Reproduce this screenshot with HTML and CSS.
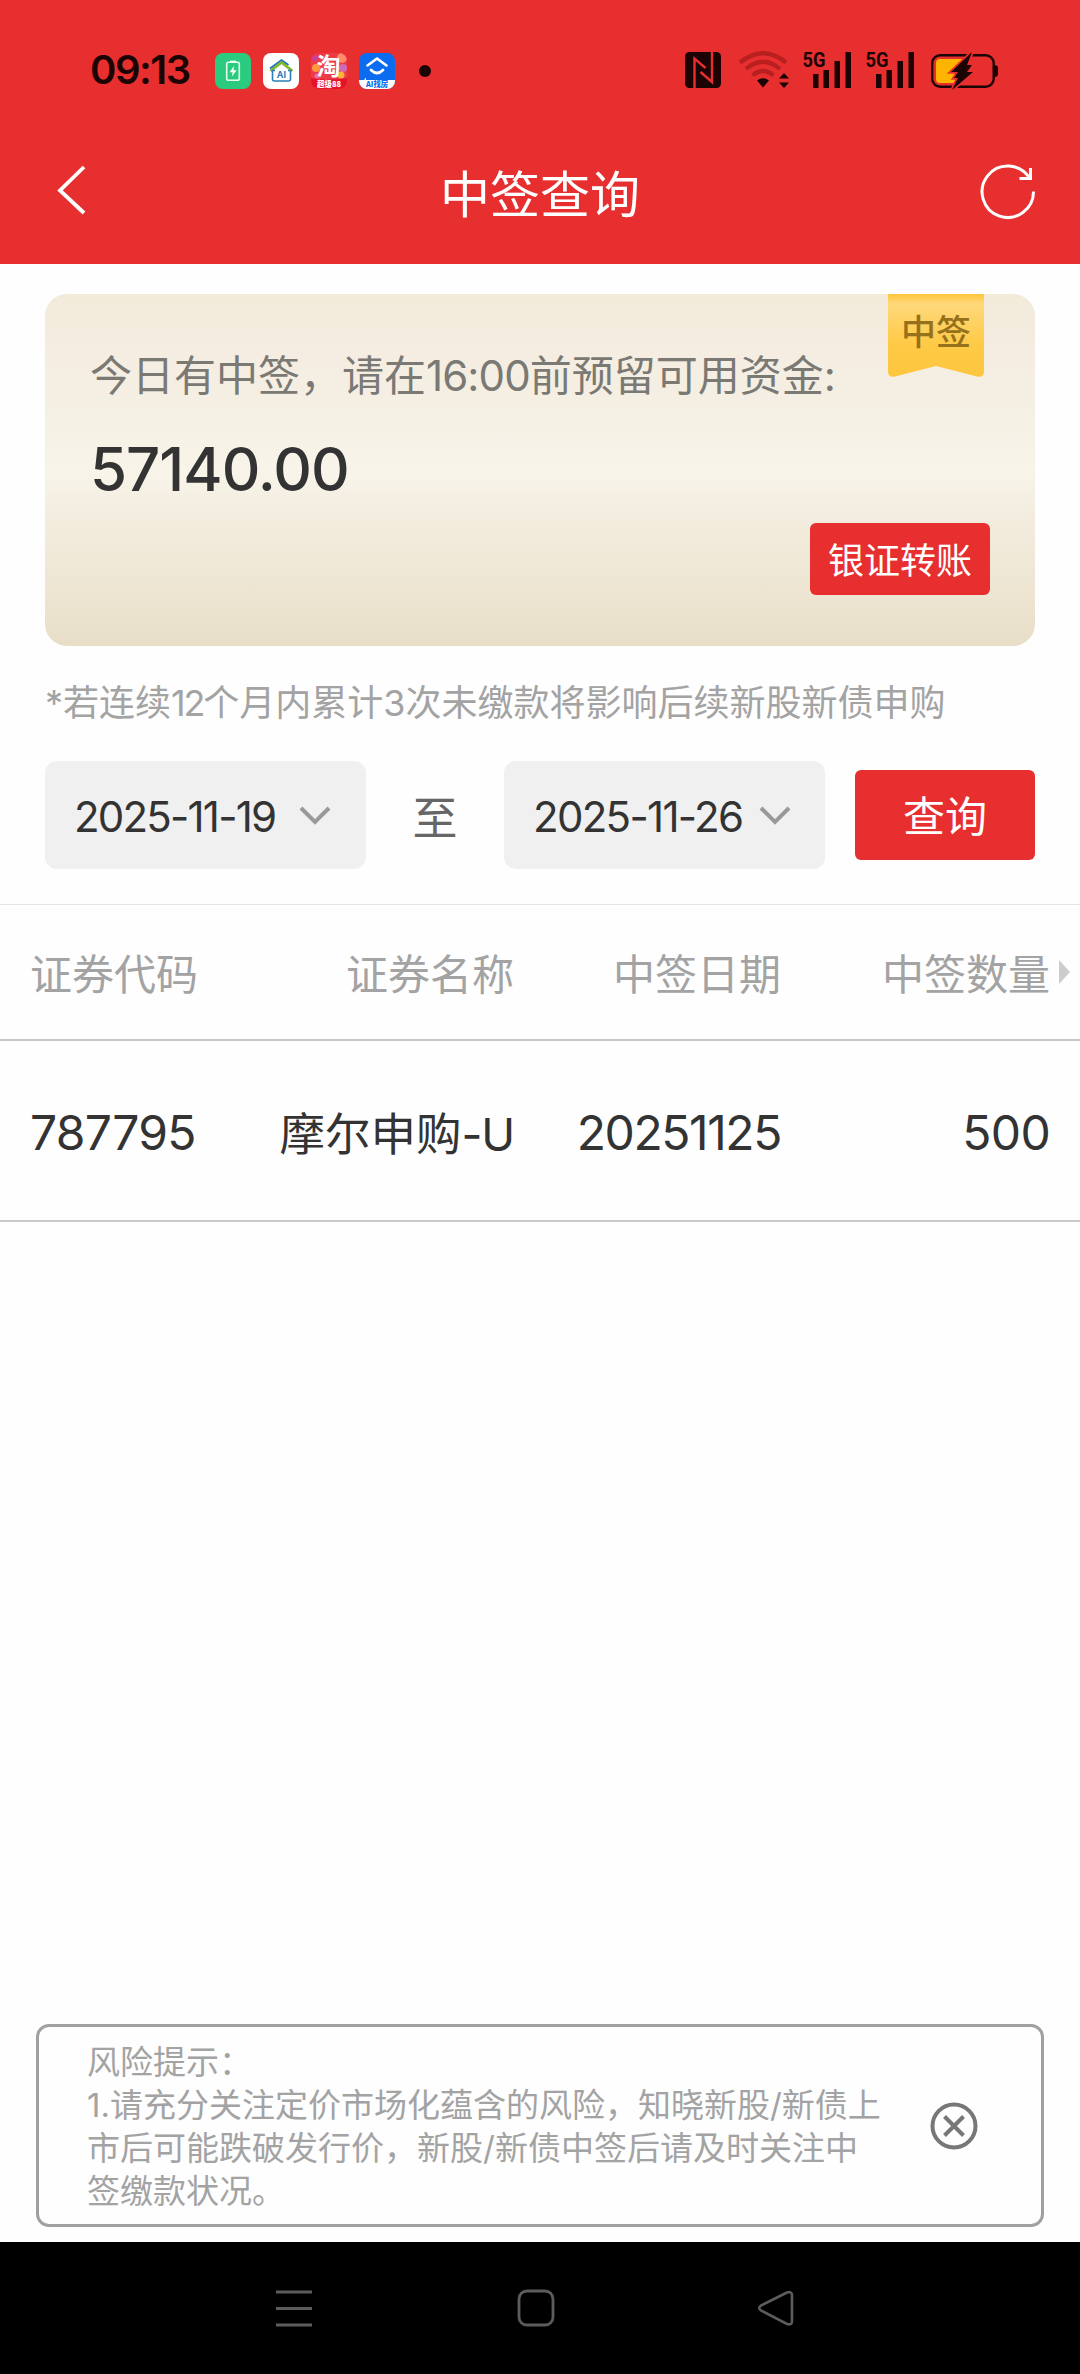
FILE: index.html
```html
<!DOCTYPE html>
<html lang="zh-CN">
<head>
<meta charset="utf-8">
<title>中签查询</title>
<link rel="stylesheet" href="styles.css">
</head>
<body>
<div class="screen">
  <div class="status">
    <span class="time">09:13</span>
    <div class="apps">
      <svg width="36" height="36" viewBox="0 0 36 36"><rect width="36" height="36" rx="8" fill="#2acb7e"/><rect x="11.7" y="9.2" width="12.6" height="18" rx="1.8" fill="none" stroke="#e9fff3" stroke-width="1.6"/><path d="M15 7.6h6v2h-6z" fill="#e9fff3"/><path d="M19 13l-4.400 6.200h3L17 23.600l4.600-6.400h-3z" fill="#fff"/></svg>
      <svg width="36" height="36" viewBox="0 0 36 36"><rect width="36" height="36" rx="8" fill="#fff"/><path d="M7 15.500L18.500 7l7 5" fill="none" stroke="#1d70b8" stroke-width="1.800"/><path d="M7.500 18L18.500 9.500 29.500 18" fill="none" stroke="#7db928" stroke-width="2.600"/><path d="M12 17.500H9.500V26q0 2 2 2h14q2 0 2-2v-8.500H25" fill="none" stroke="#2a80b8" stroke-width="1.600"/><text x="18.300" y="25" text-anchor="middle" class="tiny-ai">AI</text></svg>
      <svg width="36" height="36" viewBox="0 0 36 36"><defs><clipPath id="tb"><rect width="36" height="36" rx="8"/></clipPath></defs><g clip-path="url(#tb)"><rect width="36" height="36" fill="#ee3b48"/><circle cx="5" cy="15" r="4" fill="#ff9a3c"/><circle cx="31" cy="5" r="5" fill="#ff8a6c"/><circle cx="32" cy="15" r="4" fill="#d06ab8"/><circle cx="4" cy="5" r="3" fill="#c93fa0"/><circle cx="30" cy="22" r="3.500" fill="#ffb03c"/><circle cx="6" cy="23" r="2.500" fill="#e86ab0"/><path d="M0 25q18 3 36 0v11H0z" fill="#e6122c"/></g><text x="17.500" y="21.500" text-anchor="middle" class="tiny-tao">淘</text><text x="18" y="34" text-anchor="middle" class="tiny-sale" textLength="24" lengthAdjust="spacingAndGlyphs">超级88</text></svg>
      <svg width="36" height="36" viewBox="0 0 36 36"><defs><clipPath id="bk"><rect width="36" height="36" rx="8"/></clipPath></defs><g clip-path="url(#bk)"><rect width="36" height="36" fill="#0b6cf0"/><path d="M0 27h5l2-2.500V27h29v9H0z" fill="#fff"/><path d="M8.500 12.500L18 5.500l9.500 7" fill="none" stroke="#fff" stroke-width="2.600" stroke-linecap="round" stroke-linejoin="round"/><path d="M12 17q6 6 12 0" fill="none" stroke="#fff" stroke-width="2.800" stroke-linecap="round"/></g><text x="18" y="34" text-anchor="middle" class="tiny-find" textLength="22" lengthAdjust="spacingAndGlyphs">AI找房</text></svg>
    </div>
    <span class="dot"></span>
    <svg class="sys" width="320" height="40" viewBox="0 0 320 40">
      <rect x="0" y="1" width="36" height="36" rx="4.500" fill="#1c0404"/>
      <path d="M9.500 37V7.500L20.500 17M27 1V31L15.500 21" fill="none" stroke="#e72f2f" stroke-width="2.400"/>
      <g fill="none" stroke="#b91f1f" stroke-width="4.200"><path d="M55 11.500Q78-7 101 11.500"/><path d="M61 18Q78 3.500 95 18"/><path d="M67.500 24.500Q78 15.500 88.500 24.500"/></g>
      <path d="M72 29.500Q78 25 84 29.500L78 36.500z" fill="#1c0404"/>
      <path d="M94 27.500L99 22l5 5.500zM94 31.500h10L99 37z" fill="#1c0404"/>
      <g fill="#1c0404"><text x="117.500" y="15.800" class="net" textLength="23" lengthAdjust="spacingAndGlyphs">5G</text><rect x="128" y="23" width="5.500" height="14"/><rect x="138.500" y="19" width="5.500" height="18"/><rect x="149.500" y="10" width="5.500" height="27"/><rect x="160.500" y="1" width="5.500" height="36"/>
      <text x="180.500" y="15.800" class="net" textLength="23" lengthAdjust="spacingAndGlyphs">5G</text><rect x="191" y="23" width="5.500" height="14"/><rect x="201.500" y="19" width="5.500" height="18"/><rect x="212.500" y="10" width="5.500" height="27"/><rect x="223.500" y="1" width="5.500" height="36"/></g>
      <rect x="247.200" y="4.200" width="61.500" height="31.600" rx="8" fill="none" stroke="#1c0404" stroke-width="2.400"/>
      <path d="M309 14q4 0 4 3v6q0 3-4 3z" fill="#1c0404"/>
      <path d="M255 8h24L270 32h-15q-4 0-4-4V12q0-4 4-4z" fill="#ffb400"/>
      <path d="M287 1L266 21h7l-4 6h4l-6 12 21-18h-6l5-7h-5z" fill="#1c0404" stroke="#e72f2f" stroke-width="3.500" paint-order="stroke"/>
    </svg>
  </div>
  <header class="bar">
    <svg class="back" width="32" height="54" viewBox="0 0 32 54"><path d="M28 4L4 27.500 28 50" fill="none" stroke="#fff" stroke-width="3.800"/></svg>
    <h1>中签查询</h1>
    <svg class="refresh" width="58" height="58" viewBox="0 0 58 58"><path d="M53.500 28.500A25.700 25.700 0 1 1 49.500 15" fill="none" stroke="#fff" stroke-width="3"/><path d="M39.500 15.600H50.500V5" fill="none" stroke="#fff" stroke-width="3"/></svg>
  </header>
  <main>
    <section class="card">
      <p class="hint">今日有中签，请在<span class="n16">16:00</span>前预留可用资金:</p>
      <div class="amount">57140.00</div>
      <button class="transfer">银证转账</button>
      <div class="ribbon">
        <svg width="96" height="83" viewBox="0 0 96 83"><defs><linearGradient id="rg" x1="0" y1="0" x2="0" y2="1"><stop offset="0" stop-color="#fec63a"/><stop offset=".12" stop-color="#ffd87c"/><stop offset=".6" stop-color="#ffca46"/><stop offset="1" stop-color="#fec63e"/></linearGradient></defs><path d="M0 0h96v77q0 7-7 5.500L48 72 7 82.500Q0 84 0 77z" fill="url(#rg)"/></svg>
        <span>中签</span>
      </div>
    </section>
    <p class="note">*若连续<span class="n12">12</span>个月内累计3次未缴款将影响后续新股新债申购</p>
    <div class="filter">
      <div class="date"><span>2025-11-19</span><svg width="32" height="22" viewBox="0 0 32 22"><path d="M2 3l14 14L30 3" fill="none" stroke="#999" stroke-width="4"/></svg></div>
      <span class="to">至</span>
      <div class="date late"><span>2025-11-26</span><svg width="32" height="22" viewBox="0 0 32 22"><path d="M2 3l14 14L30 3" fill="none" stroke="#999" stroke-width="4"/></svg></div>
      <button class="query">查询</button>
    </div>
    <div class="thead row"><span>证券代码</span><span>证券名称</span><span>中签日期</span><span>中签数量</span><i class="more"></i></div>
    <div class="tbody row"><span class="code">787795</span><span class="name">摩尔申购<span class="suffix">-U</span></span><span class="day">20251125</span><span class="qty">500</span></div>
  </main>
  <aside class="risk">
    <p>风险提示：<br>1.请充分关注定价市场化蕴含的风险，知晓新股/新债上<br>市后可能跌破发行价，新股/新债中签后请及时关注中<br>签缴款状况。</p>
    <svg width="48" height="48" viewBox="0 0 48 48"><circle cx="24" cy="24" r="21.500" fill="none" stroke="#777" stroke-width="4"/><path d="M14.500 14.500l19 19M33.500 14.500l-19 19" stroke="#777" stroke-width="4"/></svg>
  </aside>
  <nav class="nav">
    <svg width="36" height="38" viewBox="0 0 36 38"><path d="M0 3h36M0 19.500h36M0 36h36" stroke="#5c5c5c" stroke-width="3"/></svg>
    <svg class="home" width="38" height="38" viewBox="0 0 38 38"><rect x="2" y="2" width="34" height="34" rx="8" fill="none" stroke="#5c5c5c" stroke-width="2.800"/></svg>
    <svg width="38" height="38" viewBox="0 0 38 38"><path d="M30 3.500L4 16.500q-3.500 2.500 0 5L30 35q5 1.500 5-3V6.500q0-4.500-5-3z" fill="none" stroke="#5c5c5c" stroke-width="2.600"/></svg>
  </nav>
</div>
</body>
</html>
```
FILE: styles.css
```css
* { box-sizing: border-box; margin: 0; padding: 0; }
body { background: #fff; }
.screen {
  width: 1080px; height: 2374px;
  display: flex; flex-direction: column;
  background: #fefefe; color: #333;
  font-family: Inter, "Noto Sans CJK SC", sans-serif;
  font-weight: 400; white-space: nowrap;
}
svg { display: block; flex: none; overflow: visible; }
button { border: 0; background: #e72f2f; color: #fff; font: inherit; border-radius: 6px; }

.status { height: 132px; padding: 10px 0 0 90px; background: #e72f2f; display: flex; align-items: center; }
.time { width: 125px; font-size: 40px; font-weight: 600; line-height: 48px; margin-bottom: 2px; color: #1c0404; letter-spacing: -1.500px; }
.apps { display: flex; gap: 12px; }
.dot { width: 12px; height: 12px; border-radius: 50%; background: #1c0404; margin-left: 24px; }
.sys { margin-left: 254px; }
.net { font: 700 21px Roboto, sans-serif; }
.tiny-ai { font: 700 9px Inter, sans-serif; fill: #2a80b8; }
.tiny-tao { font: 700 24px "Noto Sans CJK SC", sans-serif; fill: #fff; }
.tiny-sale { font: 900 8px "Noto Sans CJK SC", sans-serif; fill: #fff; }
.tiny-find { font: 900 7.500px "Noto Sans CJK SC", sans-serif; fill: #0b6cf0; }

.bar { height: 132px; padding: 0 42px 0 56px; background: #e72f2f; color: #fff; display: flex; align-items: center; justify-content: space-between; }
.bar h1 { font-size: 50px; font-weight: 400; line-height: 60px; margin: 0 0 6px 12px; }
.back { margin-bottom: 16px; }
.refresh { margin-bottom: 12px; }

main { flex: 1; }
.card {
  position: relative; margin: 30px 45px 0; height: 352px; padding: 52px 45px 51px;
  border-radius: 22px; display: flex; flex-direction: column;
  background: linear-gradient(#f2ebda, #f5ede1 17%, #f5f1e5 38%, #f8f4e9 51%, #f4eee1 60%, #eee6d3 83%, #e8dec8);
}
.hint { font-size: 42px; line-height: 60px; color: #7a7974; }
.n16 { letter-spacing: -0.900px; }
.amount { font-size: 60px; font-weight: 500; line-height: 72px; margin-top: 27px; letter-spacing: -1px; }
.transfer { width: 180px; height: 72px; padding-bottom: 2px; font-size: 36px; margin-top: auto; align-self: flex-end; }
.ribbon { position: absolute; right: 51px; top: 0; width: 96px; height: 83px; }
.ribbon span { position: absolute; left: 13px; top: 11px; font-size: 35px; line-height: 54px; font-weight: 500; color: #94711a; }
.note { margin: 30px 45px 0; height: 54px; font-size: 36px; line-height: 54px; color: #a3a3a3; }
.n12 { letter-spacing: -2.200px; }
.filter { display: flex; align-items: center; margin-top: 31px; padding: 0 45px; height: 108px; }
.date { width: 321px; height: 108px; padding: 2px 35px 0 29px; background: #f0f0f0; border-radius: 12px; display: flex; align-items: center; justify-content: space-between; font-size: 42px; letter-spacing: -1.800px; }
.late { padding-right: 34px; letter-spacing: -1.700px; }
.to { width: 138px; text-align: center; font-size: 45px; color: #666; }
.query { width: 180px; height: 90px; padding-bottom: 3px; margin-left: 30px; font-size: 42px; }
.row { position: relative; display: grid; grid-template-columns: 166px 318px 267px 1fr; padding: 0 30px; align-items: center; text-align: right; }
.row > span:first-child { text-align: left; }
.thead { margin-top: 35px; height: 137px; padding-bottom: 1px; border-top: 1px solid #e4e4e4; border-bottom: 2px solid #c9c9c9; font-size: 42px; color: #a3a3a3; }
.more { position: absolute; right: 10px; top: 55px; border-left: 11px solid #ccc; border-top: 12px solid transparent; border-bottom: 12px solid transparent; }
.tbody { height: 181px; padding-top: 3px; border-bottom: 2px solid #c9c9c9; font-size: 48px; letter-spacing: -0.700px; }
.name { font-size: 45.500px; letter-spacing: 0; padding-bottom: 3px; }
.suffix { letter-spacing: -1.200px; }
.day { letter-spacing: -1.400px; }

.risk { margin: 0 36px 15px; height: 203px; padding: 0 63px 0 48px; border: 3px solid #a0a0a0; border-radius: 13px; display: flex; align-items: center; justify-content: space-between; font-size: 33px; line-height: 43px; color: #a3a3a3; }
.risk p { padding-top: 3px; }
.nav { height: 132px; background: #000; display: flex; align-items: center; padding: 0 285px 0 276px; justify-content: space-between; }
.home { margin-left: 3px; }
```
